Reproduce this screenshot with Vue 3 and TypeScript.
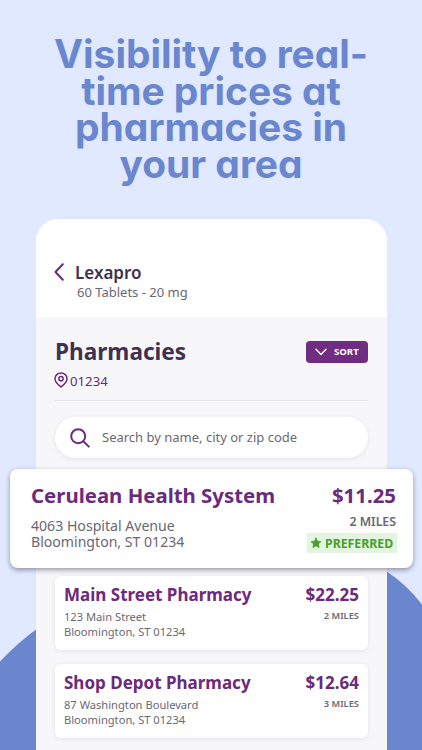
<script setup lang="ts">
interface Pharmacy {
  name: string
  street: string
  city: string
  price: string
  distance: string
}

const headline: string[] = ['Visibility to real-', 'time prices at', 'pharmacies in', 'your area']

const featured: Pharmacy = {
  name: 'Cerulean Health System',
  street: '4063 Hospital Avenue',
  city: 'Bloomington, ST 01234',
  price: '$11.25',
  distance: '2 MILES',
}

const pharmacies: Pharmacy[] = [
  { name: 'Main Street Pharmacy', street: '123 Main Street', city: 'Bloomington, ST 01234', price: '$22.25', distance: '2 MILES' },
  { name: 'Shop Depot Pharmacy', street: '87 Washington Boulevard', city: 'Bloomington, ST 01234', price: '$12.64', distance: '3 MILES' },
]
</script>

<template>
  <main class="page">
    <svg class="backdrop" viewBox="0 0 422 750" aria-hidden="true">
      <path d="M0 661.5Q17 643.5 36 629.5L60 615V750H0Z" />
      <path d="M370 563Q379 567 387 571.8Q406 584 422 604.500V750H370Z" />
    </svg>

    <h1 class="headline">
      <span v-for="line in headline" :key="line" class="headline-line">{{ line }}</span>
    </h1>

    <section class="phone">
      <header class="drug">
        <svg class="back" viewBox="0 0 10 18"><path d="M8.800 1.200 1.500 9l7.300 7.800" /></svg>
        <div>
          <div class="drug-name">Lexapro</div>
          <div class="drug-dose">60 Tablets - 20 mg</div>
        </div>
      </header>

      <div class="content">
        <div class="title-row">
          <h2 class="title">Pharmacies</h2>
          <button class="sort" type="button">
            <svg class="chevron" viewBox="0 0 12 8"><path d="M1 1.200 6 6.400l5-5.200" /></svg>
            <span>SORT</span>
          </button>
        </div>

        <div class="zip">
          <svg class="pin" viewBox="0 0 14 16">
            <path d="M7 1C3.600 1 1 3.500 1 6.800c0 3.700 3.600 6.300 6 8.200 2.400-1.900 6-4.500 6-8.200C13 3.500 10.400 1 7 1Z" />
            <circle cx="7" cy="6.700" r="2.100" />
          </svg>
          <span>01234</span>
        </div>

        <div class="search">
          <svg class="magnifier" viewBox="0 0 20 20">
            <circle cx="8.200" cy="8.200" r="7" />
            <path d="m13.300 13.300 5.500 5.300" />
          </svg>
          <span class="placeholder">Search by name, city or zip code</span>
        </div>

        <article class="featured">
          <div>
            <h3 class="featured-name">{{ featured.name }}</h3>
            <p class="featured-address">{{ featured.street }}<br />{{ featured.city }}</p>
          </div>
          <div class="featured-side">
            <div class="featured-price">{{ featured.price }}</div>
            <div class="featured-distance">{{ featured.distance }}</div>
            <div class="badge">
              <svg class="star" viewBox="0 0 12 12">
                <path d="m6 1 1.500 3.200 3.500.4-2.600 2.400.7 3.500L6 8.800l-3.100 1.700.7-3.500L1 4.600l3.500-.4Z" />
              </svg>
              <span>PREFERRED</span>
            </div>
          </div>
        </article>

        <article v-for="p in pharmacies" :key="p.name" class="card">
          <div>
            <h3 class="card-name">{{ p.name }}</h3>
            <p class="card-address">{{ p.street }}<br />{{ p.city }}</p>
          </div>
          <div class="card-side">
            <div class="card-price">{{ p.price }}</div>
            <div class="card-distance">{{ p.distance }}</div>
          </div>
        </article>
      </div>
    </section>
  </main>
</template>

<style>
body {
  margin: 0;
  background: #e0e9ff;
}
</style>

<style scoped>
.page {
  position: relative;
  box-sizing: border-box;
  width: 422px;
  height: 750px;
  padding-top: 36px;
  overflow: hidden;
  background: #e0e9ff;
  color: #6a6873;
  font-family: 'Noto Sans', 'Open Sans', sans-serif;
}

h1,
h2,
h3,
p {
  margin: 0;
}

svg {
  display: block;
  flex: none;
  fill: none;
  stroke: #6b2a7b;
  stroke-linecap: round;
  stroke-linejoin: round;
}

.backdrop {
  position: absolute;
  inset: 0;
  width: 422px;
  height: 750px;
  fill: #6a86cf;
  stroke: none;
}

.headline {
  position: relative;
  height: 183px;
  color: #6a86cf;
  font: 700 39px/36.700px Inter, sans-serif;
  font-feature-settings: 'cv11';
  letter-spacing: -0.050px;
  text-align: center;
  white-space: nowrap;
}

.headline-line {
  display: block;
}

.phone {
  position: relative;
  width: 351px;
  height: 531px;
  margin-left: 36px;
  border-radius: 22px 22px 0 0;
  background: #f7f7fa;
}

.drug {
  display: flex;
  box-sizing: border-box;
  height: 98px;
  padding: 44px 18px 0;
  border-radius: 22px 22px 0 0;
  background: #fff;
}

.back {
  width: 10px;
  height: 18px;
  margin: 0 10px 0 0;
  stroke-width: 2;
}

.drug-name {
  margin-left: 1px;
  color: #413150;
  font-size: 17px;
  font-weight: 600;
  line-height: 20px;
}

.drug-dose {
  margin-left: 3px;
  font-size: 13px;
  line-height: 18px;
}

.content {
  padding: 20px 19px 0;
}

.title-row {
  display: flex;
  align-items: center;
  justify-content: space-between;
  height: 28px;
}

.title {
  margin-top: 2px;
  color: #413150;
  font-size: 22.600px;
  font-weight: 700;
  line-height: 28px;
}

.sort {
  display: flex;
  align-items: center;
  gap: 7px;
  width: 62px;
  height: 22px;
  margin-top: 2px;
  padding: 0 0 0 9px;
  border: 0;
  border-radius: 4px;
  background: #6f2c80;
  color: #fff;
  font: 700 9.600px/22px 'Noto Sans', sans-serif;
}

.chevron {
  width: 12px;
  height: 8px;
  stroke: #fff;
  stroke-width: 1.400;
}

.zip {
  display: flex;
  align-items: center;
  gap: 2px;
  height: 18px;
  margin-top: 7px;
  padding-bottom: 10px;
  border-bottom: 1px solid #e6e5eb;
  color: #6b2a7b;
  font-size: 13.200px;
  line-height: 18px;
}

.pin {
  width: 14px;
  height: 16px;
  margin: -2px 0 0 -1px;
  stroke-width: 1.500;
}

.search {
  display: flex;
  align-items: center;
  gap: 12px;
  box-sizing: border-box;
  height: 41px;
  margin-top: 16px;
  padding-left: 15px;
  border-radius: 21px;
  background: #fff;
  box-shadow: 0 1px 4px rgba(60, 50, 90, 0.1);
  font-size: 13px;
}

.placeholder {
  margin-top: -2px;
}

.magnifier {
  width: 20px;
  height: 20px;
  stroke-width: 2;
}

.featured {
  position: relative;
  display: flex;
  justify-content: space-between;
  box-sizing: border-box;
  height: 99px;
  margin: 11px -45px 8px;
  padding: 14px 17px 0 21px;
  border-radius: 8px;
  background: #fff;
  box-shadow: 0 2px 5px rgba(50, 45, 70, 0.48);
}

.featured-name,
.featured-price {
  color: #6b2a7b;
  font-size: 20.400px;
  font-weight: 700;
  line-height: 24px;
}

.featured-address {
  margin-top: 11px;
  font-size: 14.100px;
  line-height: 16.300px;
}

.featured-side {
  display: flex;
  flex-direction: column;
  align-items: flex-end;
}

.featured-distance {
  margin-top: 7px;
  font-size: 12.300px;
  font-weight: 600;
  line-height: 16px;
}

.badge {
  display: flex;
  align-items: center;
  gap: 3px;
  box-sizing: border-box;
  width: 90px;
  height: 20px;
  margin: 3px -1px 0 0;
  padding-left: 3px;
  background: #e4f5df;
  color: #46a02b;
  font-size: 12.300px;
  font-weight: 700;
}

.star {
  width: 12px;
  height: 12px;
  fill: #46a02b;
  stroke: #46a02b;
  stroke-width: 0.800;
}

.card {
  display: flex;
  justify-content: space-between;
  box-sizing: border-box;
  height: 74px;
  margin-bottom: 14px;
  padding: 8px 9px 0;
  border-radius: 6px;
  background: #fff;
  box-shadow: 0 1px 4px rgba(60, 50, 90, 0.1);
}

.card-name,
.card-price {
  color: #6b2a7b;
  font-size: 17px;
  font-weight: 700;
  line-height: 22px;
}

.card-address {
  margin-top: 3px;
  font-size: 11.150px;
  line-height: 15px;
}

.card-side {
  text-align: right;
}

.card-distance {
  margin-top: 4px;
  font-size: 9.300px;
  font-weight: 600;
  line-height: 12px;
}
</style>
